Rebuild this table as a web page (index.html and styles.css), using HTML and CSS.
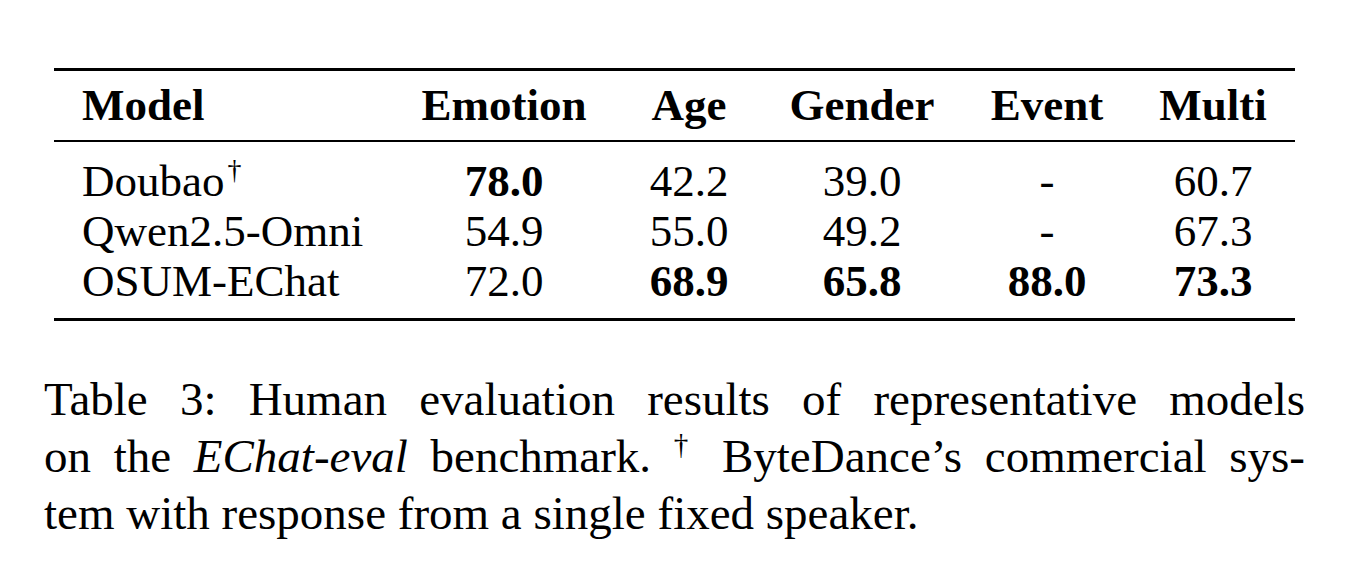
FILE: index.html
```html
<!DOCTYPE html>
<html lang="en">
<head>
<meta charset="utf-8">
<title>Table 3</title>
<link rel="stylesheet" href="styles.css">
</head>
<body>
<main class="page">
  <table class="results">
    <colgroup>
      <col class="c-model">
      <col class="c-emotion">
      <col class="c-age">
      <col class="c-gender">
      <col class="c-event">
      <col class="c-multi">
    </colgroup>
    <thead>
      <tr>
        <th class="name">Model</th>
        <th>Emotion</th>
        <th>Age</th>
        <th>Gender</th>
        <th>Event</th>
        <th>Multi</th>
      </tr>
    </thead>
    <tbody>
      <tr class="first">
        <td class="name">Doubao<sup class="dag">†</sup></td>
        <td><b>78.0</b></td>
        <td>42.2</td>
        <td>39.0</td>
        <td>-</td>
        <td>60.7</td>
      </tr>
      <tr>
        <td class="name">Qwen2.5-Omni</td>
        <td>54.9</td>
        <td>55.0</td>
        <td>49.2</td>
        <td>-</td>
        <td>67.3</td>
      </tr>
      <tr class="last">
        <td class="name">OSUM-EChat</td>
        <td>72.0</td>
        <td><b>68.9</b></td>
        <td><b>65.8</b></td>
        <td><b>88.0</b></td>
        <td><b>73.3</b></td>
      </tr>
    </tbody>
  </table>
  <p class="caption">
    <span class="line justify">Table 3: Human evaluation results of representative models</span>
    <span class="line justify">on the <i>EChat-eval</i> benchmark. <sup class="dag">†</sup> ByteDance’s commercial sys-</span>
    <span class="line">tem with response from a single fixed speaker.</span>
  </p>
</main>
</body>
</html>
```

FILE: styles.css
```css
html, body {
  margin: 0;
  padding: 0;
  background: #ffffff;
}

body {
  font-family: "Liberation Serif", Tinos, "Times New Roman", Times, "Nimbus Roman", "DejaVu Serif", serif;
  color: #000000;
}

.page {
  padding: 68px 0 0 44px;
  width: 1261px;
}

.results {
  margin-left: 10px;
  width: 1241px;
  table-layout: fixed;
  border-collapse: separate;
  border-spacing: 0;
  font-family: inherit;
  font-size: 45px;
  line-height: 50px;
}

.c-model { width: 337px; }
.c-emotion { width: 226px; }
.c-age { width: 144px; }
.c-gender { width: 202px; }
.c-event { width: 168px; }
.c-multi { width: 164px; }

.results th,
.results td {
  padding: 0;
  text-align: center;
  white-space: nowrap;
}

.results th {
  font-weight: bold;
  border-top: 3px solid #000;
  border-bottom: 2px solid #000;
  padding-top: 9px;
  padding-bottom: 10px;
}

.results .name {
  text-align: left;
  padding-left: 28px;
}

.results tr.first td {
  padding-top: 14px;
}

.results tr.last td {
  padding-bottom: 12px;
  border-bottom: 3px solid #000;
}

.results b {
  font-weight: bold;
}

.dag {
  font-size: 0.62em;
  line-height: 0;
  vertical-align: 0.62em;
  margin-left: 3px;
}

.caption {
  margin: 50px 0 0 0;
  font-size: 47px;
  line-height: 57px;
}

.caption .line {
  display: block;
  white-space: nowrap;
}

.caption .justify {
  text-align: justify;
  text-align-last: justify;
}

.caption i {
  font-style: italic;
}

.caption .dag {
  margin-left: 0;
}
```
